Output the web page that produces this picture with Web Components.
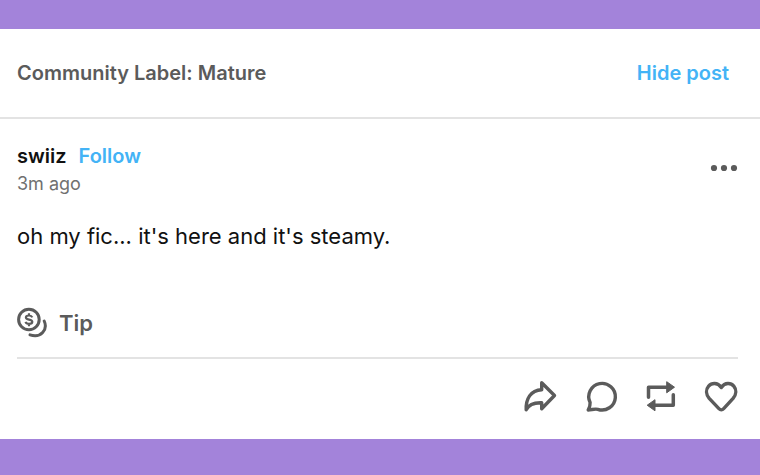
<!DOCTYPE html>
<html lang="en">
<head>
<meta charset="utf-8">
<title>Community Label</title>
<style>
body { margin: 0; background: #a383da; font-family: Inter, "Liberation Sans", sans-serif; color: #5b5b5b; --accent: #43b3f6; --line: #e3e3e3; }
</style>
</head>
<body>
<post-card>
  <label-bar slot="label">Community Label: Mature</label-bar>
  <post-author slot="author" name="swiiz" time="3m ago"></post-author>
  oh my fic... it's here and it's steamy.
  <tip-button slot="tip">Tip</tip-button>
  <post-actions slot="actions"></post-actions>
</post-card>
<script>
const RESET = `button{font:inherit;color:inherit;background:none;border:0;margin:0;padding:0;cursor:pointer}svg{display:block}*{box-sizing:border-box}`;
const define = (name, html) => customElements.define(name, class extends HTMLElement {
  constructor() {
    super();
    const root = this.attachShadow({ mode: "open" });
    root.innerHTML = `<style>${RESET}</style>` + html;
    root.querySelectorAll("[data-attr]").forEach(n => { n.textContent = this.getAttribute(n.dataset.attr); });
  }
});

define("post-card", `<style>
:host{display:block;padding:29px 0 36px}
article{background:#fff}
.main{padding:23px 22px 25px 17px}
p{margin:20px 0 53px;font-size:22px;line-height:36px;color:#111}
footer{margin-top:18px;padding-top:21px;border-top:2px solid var(--line)}
</style>
<article><slot name="label"></slot><div class="main"><slot name="author"></slot><p><slot></slot></p><slot name="tip"></slot><footer><slot name="actions"></slot></footer></div></article>`);

define("label-bar", `<style>
:host{display:flex;justify-content:space-between;align-items:center;padding:30px 31px 30px 17px;border-bottom:2px solid var(--line);font-size:20px;line-height:28px;font-weight:600}
button{color:var(--accent)}
</style><span><slot></slot></span><button type="button">Hide post</button>`);

define("post-author", `<style>
:host{display:flex;justify-content:space-between;align-items:center}
.row{display:flex;gap:12px;font-size:20px;line-height:28px;font-weight:600}
.name{color:#111}
button{color:var(--accent)}
.time{font-size:18px;line-height:28px;color:#707070}
.more{color:#5b5b5b;padding-bottom:4px}
</style>
<div><div class="row"><span class="name" data-attr="name"></span><button type="button">Follow</button></div><div class="time" data-attr="time"></div></div>
<button class="more" type="button" aria-label="More options"><svg width="28" height="8" viewBox="0 0 28 8" fill="currentColor"><circle cx="4" cy="4" r="3.1"/><circle cx="14" cy="4" r="3.1"/><circle cx="24" cy="4" r="3.1"/></svg></button>`);

define("tip-button", `<style>
:host{display:block}
button{display:flex;align-items:center;gap:12px;font-size:22px;line-height:32px;font-weight:600}
</style><button type="button"><svg width="30" height="32" viewBox="0 0 30 32" fill="none" stroke="currentColor"><circle cx="11.9" cy="12.500" r="10.300" stroke-width="3"/><path d="M15.300 10.400c-.5-1.200-1.700-1.900-3.300-1.900-1.900 0-3.100.8-3.100 2 0 3 6.400 1.200 6.400 4.300 0 1.400-1.400 2.100-3.300 2.100-1.700 0-3-.7-3.500-2M12 6.200v2.300M12 16.900v2.300" stroke-width="2.200"/><path d="M27.200 14C31 22.500 24 31.500 13 27.900" stroke-width="3" stroke-linecap="round"/></svg><slot></slot></button>`);

define("post-actions", `<style>
:host{display:flex;justify-content:flex-end;gap:26px;line-height:0}
svg{fill:none;stroke:currentColor;stroke-width:3.4;stroke-linejoin:round}
.tip{fill:currentColor;stroke-width:1}
</style>
<button type="button" aria-label="Share"><svg width="34" height="34" viewBox="0 0 34 34"><path d="M17.700 2.800L30.500 15.500L17.700 28.800V22.800C10 22.500 4.800 24.500 2.200 29.800C1.700 19 6.500 10.200 17.700 9.700Z"/></svg></button>
<button type="button" aria-label="Reply"><svg width="34" height="34" viewBox="0 0 34 34"><path d="M4.200 30C5.500 27.500 6.400 25.500 6.100 22.500A13.300 13.300 0 1 1 13.800 29.300C10.800 28.500 7.500 29.900 4.200 30Z"/></svg></button>
<button type="button" aria-label="Reblog"><svg width="34" height="34" viewBox="0 0 34 34"><path d="M4.500 17.300V7.200H24M29.300 14.800V25.200H10" stroke-width="3.500" stroke-linecap="round"/><path class="tip" d="M22.700 1.700L30.500 7.200L22.700 12.800ZM11 19.700L3.200 25.200L11 30.800Z"/></svg></button>
<button type="button" aria-label="Like"><svg width="34" height="34" viewBox="0 0 34 34"><path d="M17.300 7.500C13.500 2 7.500 2.800 4.600 6.100C1.700 9.500 1.800 14.300 5.200 18.300L14.900 28.700C16.400 30.300 18.200 30.300 19.700 28.700L29.100 18.300C32.500 14.300 32.600 9.500 29.800 6.100C27 2.800 21 2 17.300 7.500Z"/></svg></button>`);
</script>
</body>
</html>
